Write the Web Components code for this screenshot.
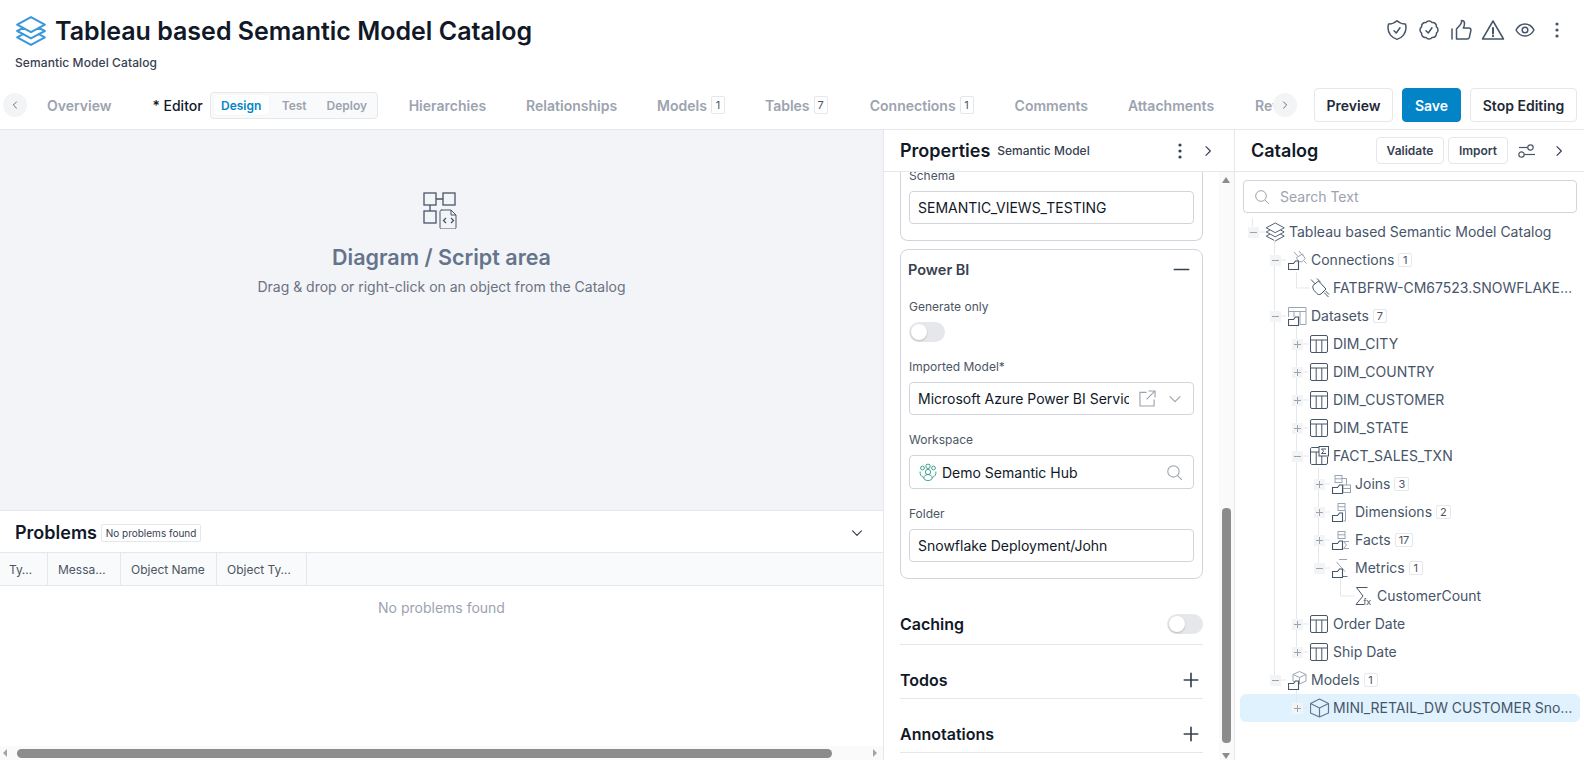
<!DOCTYPE html>
<html lang="en">
<head>
<meta charset="utf-8">
<title>Tableau based Semantic Model Catalog</title>
<style>
html,body{margin:0;padding:0;height:100%;overflow:hidden;background:#fff;font-family:Inter,"Liberation Sans",sans-serif;}
</style>
</head>
<body>
<app-shell>
  <page-header slot="header"></page-header>
  <tab-bar slot="tabs"></tab-bar>
  <diagram-area slot="diagram"></diagram-area>
  <problems-panel slot="problems"></problems-panel>
  <h-scrollbar slot="hbar"></h-scrollbar>
  <properties-panel slot="props"></properties-panel>
  <catalog-panel slot="catalog"></catalog-panel>
</app-shell>
<script>
const folder='<path d="M.5 13.500h5l2-2.500h3v8.500H.5z" fill="#fff" stroke="#475569" stroke-width="1.100"/>';
const L='stroke="#9aa5b4" fill="none" stroke-width="1"';
const D='stroke="#475569" fill="none" stroke-width="1"';
const ICONS={
 layers:{v:'0 0 24 24',p:'<path d="M6.429 9.75 2.25 12l4.179 2.25m0-4.5 5.571 3 5.571-3m-11.142 0L2.25 7.5 12 2.25l9.75 5.25-4.179 2.25m0 0L21.75 12l-4.179 2.25m0 0 4.179 2.25L12 21.75 2.25 16.5l4.179-2.25m11.142 0-5.571 3-5.571-3" stroke-linejoin="round" stroke-linecap="round"/>'},
 shield:{v:'0 0 24 24',p:'<path d="M9 12.75 11.25 15 15 9.75m-3-7.036A11.959 11.959 0 0 1 3.598 6 11.99 11.99 0 0 0 3 9.749c0 5.592 3.824 10.29 9 11.623 5.176-1.332 9-6.03 9-11.622 0-1.31-.21-2.571-.598-3.751h-.152c-3.196 0-6.1-1.248-8.25-3.285Z" stroke-linejoin="round" stroke-linecap="round"/>'},
 badge:{v:'0 0 24 24',p:'<path d="M9 12.75 11.25 15 15 9.75M21 12c0 1.268-.63 2.39-1.593 3.068a3.745 3.745 0 0 1-1.043 3.296 3.745 3.745 0 0 1-3.296 1.043A3.745 3.745 0 0 1 12 21c-1.268 0-2.39-.63-3.068-1.593a3.746 3.746 0 0 1-3.296-1.043 3.745 3.745 0 0 1-1.043-3.296A3.745 3.745 0 0 1 3 12c0-1.268.63-2.39 1.593-3.068a3.745 3.745 0 0 1 1.043-3.296 3.746 3.746 0 0 1 3.296-1.043A3.746 3.746 0 0 1 12 3c1.268 0 2.39.63 3.068 1.593a3.746 3.746 0 0 1 3.296 1.043 3.746 3.746 0 0 1 1.043 3.296A3.745 3.745 0 0 1 21 12Z" stroke-linejoin="round" stroke-linecap="round"/>'},
 thumb:{v:'0 0 24 24',p:'<path d="M3 11v10M7.500 11v10M7.500 11l3.800-4.200c.8-.9 1.200-2 1.200-3.200V2.500c1.800 0 3 1.300 3 3 0 1.500-.5 3.200-1.200 4.500h5.700c1.300 0 2.200 1.200 1.900 2.400l-1.500 6.800c-.3 1.100-1.200 1.800-2.300 1.800H7.500" stroke-linejoin="round" stroke-linecap="round"/>'},
 warn:{v:'0 0 24 24',p:'<path d="M12 3 22.500 21h-21z" stroke-linejoin="round"/><path d="M12 10v5.500M12 17.800v.4" stroke-linecap="round" stroke-width="2"/>'},
 eye:{v:'0 0 24 24',p:'<path d="M3 12C5.200 8 8.300 6 12 6s6.800 2 9 6c-2.200 4-5.300 6-9 6s-6.800-2-9-6z" stroke-linejoin="round"/><circle cx="12" cy="12" r="2.800"/>'},
 kebab:{v:'0 0 24 24',p:'<circle cx="12" cy="6" r="1.600" fill="currentColor" stroke="none"/><circle cx="12" cy="12" r="1.600" fill="currentColor" stroke="none"/><circle cx="12" cy="18" r="1.600" fill="currentColor" stroke="none"/>'},
 chevR:{v:'0 0 24 24',p:'<path d="m8.500 4.500 7.500 7.500-7.500 7.500" stroke-linejoin="round" stroke-linecap="round"/>'},
 chevL:{v:'0 0 24 24',p:'<path d="m15.500 4.500-7.500 7.500 7.500 7.500" stroke-linejoin="round" stroke-linecap="round"/>'},
 chevD:{v:'0 0 24 24',p:'<path d="m4.500 8.500 7.500 7.500 7.500-7.500" stroke-linejoin="round" stroke-linecap="round"/>'},
 plus:{v:'0 0 24 24',p:'<path d="M12 3v18M3 12h18" stroke-linecap="round"/>'},
 minus:{v:'0 0 24 24',p:'<path d="M2 12h20" stroke-linecap="round"/>'},
 search:{v:'0 0 24 24',p:'<circle cx="10.500" cy="10.500" r="8"/><path d="m16.500 16.500 5.500 5.500" stroke-linecap="round"/>'},
 sliders:{v:'0 0 18 14',p:'<circle cx="12.500" cy="3.500" r="2.700"/><path d="M1 3.500h8.800"/><circle cx="3.500" cy="10.500" r="2.700"/><path d="M6.200 10.500H17"/>'},
 ext:{v:'0 0 18 18',p:'<path d="M8 2.500H1v14.500h15v-7M10 1h7v7M17 1 8 10"/>'},
 team:{v:'0 0 18 18',p:'<circle cx="9" cy="3.300" r="2.200"/><circle cx="3.500" cy="5" r="1.900"/><circle cx="14.500" cy="5" r="1.900"/><circle cx="9" cy="9" r="2.600"/><path d="M1.200 8.500c-.6 3 1 5 3.300 5.800M16.800 8.500c.6 3-1 5-3.300 5.800M4.800 15c0-2.200 1.800-3.400 4.200-3.400s4.200 1.200 4.200 3.400c0 1.500-1.800 2.500-4.200 2.500s-4.200-1-4.200-2.500z"/>'},
 diagram:{v:'0 0 34 37',p:'<rect x="1" y="1" width="12" height="12"/><rect x="20" y="1" width="12" height="12"/><rect x="1" y="19" width="12" height="12"/><path d="M13 7h7M7 13v6"/><path d="M18 18h10l5 5v12.500c0 .8-.7 1.500-1.500 1.500h-13c-.8 0-1.500-.7-1.500-1.500V19.500c0-.8.700-1.500 1.500-1.500zM28 18v5h5" stroke-width="1"/><path d="m23 26-2.500 2.500 2.500 2.500M28 26l2.500 2.500-2.500 2.500"/>'},
 table:{v:'1 0 20 20',raw:`<g ${D} stroke-width="1.100"><rect x="1.500" y="1.500" width="17" height="17" rx="1.500"/><path d="M1.500 6h17M7.200 6v12.500M12.800 6v12.500"/></g>`},
 fact:{v:'1 0 20 20',raw:`<g ${D} stroke-width="1.100"><path d="M10 1.500H3c-.8 0-1.500.7-1.500 1.500v14c0 .8.700 1.500 1.500 1.500h14c.8 0 1.500-.7 1.500-1.500v-6M1.500 6H10M7.200 6v12.500M12.800 10v8.500"/><rect x="10" y="0.500" width="9.500" height="9.500"/><path d="M17 3h-4.500l2.200 2.200-2.200 2.300H17" stroke-width="1"/></g>`},
 model:{v:'0 0 20 20',raw:`<g stroke="#64748b" fill="none" stroke-width="1.200"><path d="M9.500 1 18.500 5.500v9.500L9.500 19 .5 15V5.500zM.5 5.500l9 4.500 9-4.500M9.500 10v9" stroke-linejoin="round"/></g>`},
 plug:{v:'0 0 20 20',raw:`<g ${D} stroke-width="1.100"><path d="M3 7.500 8.500 3l7.500 8-5 5c-1.500 1-3 .6-4-.4l-3-3.200C3 11 2.500 9 3 7.500z"/><path d="M1 1.500l4 4.200M7 .5l3.500 3.700M14 14.500l4.500 4.500M15.500 13l3.500 3.500"/></g>`},
 rootlayers:{v:'2 1.200 21.670 21.670',stroke:'#475569',sw:1,p:'<path d="M6.429 9.75 2.25 12l4.179 2.25m0-4.5 5.571 3 5.571-3m-11.142 0L2.25 7.5 12 2.25l9.750 5.250-4.179 2.250m0 0L21.750 12l-4.179 2.250m0 0 4.179 2.250L12 21.750 2.250 16.500l4.179-2.250m11.142 0-5.571 3-5.571-3" stroke-linejoin="round"/>'},
 fConn:{v:'0 0 20 20',raw:`<g ${L}><path d="M6 2l4 4.500M11 1l3.500 4.500M8.500 7.500l6-3.500 2.500 4.500-2.500 3c-2 .8-4 .2-5-1.500zM16 11l2.500 2.500"/></g>${folder}`},
 fData:{v:'0 0 20 20',raw:`<g ${L}><path d="M.5 11V1.500h17.500v17h-6"/><path d="M.5 5.500H18M6 5.500V11M12 5.500v13"/></g>${folder}`},
 fJoin:{v:'0 0 20 20',raw:`<g ${L}><rect x="3" y="1.500" width="7" height="7"/><path d="M3 4.800h7M10 4.500h4.500V11"/><rect x="11" y="11" width="7.500" height="7.500"/><path d="M11 14.500h7.500"/></g>${folder}`},
 fDim:{v:'0 0 20 20',raw:`<g ${L}><rect x="6" y="1.500" width="7" height="7"/><path d="M6 4.800h7M13.500 8.500v10.500h-2"/></g>${folder}`},
 fFact:{v:'0 0 20 20',raw:`<g ${L}><rect x="6" y="1.500" width="7" height="7"/><path d="M6 4.800h7M17 11.500h-5.500l3 3.500-3 3.500H17"/></g>${folder}`},
 fMetric:{v:'0 0 20 20',raw:`<g ${L}><path d="M7 1.500h8M4.500 4 13 13.500"/><path d="M11 18.500h4.500" stroke="#64748b"/></g>${folder}`},
 fModel:{v:'0 0 20 20',raw:`<g ${L}><path d="M11.500 1.500 18 4.500v6.500l-6.500 3-6.500-3V4.500zM5 4.500l6.500 3 6.500-3M11.500 7.500V14" stroke-linejoin="round"/></g>${folder}`},
 sigmaFx:{v:'1 0 20 20',raw:`<path d="M14.500 1.500H3.500L10 10 3 18.500h8" ${D}/><text x="10.500" y="19" font-family="Liberation Sans,sans-serif" font-size="9.500" fill="#475569" stroke="none">fx</text>`},
};
function svg(name,w,h,color,sw,style){
  const i=ICONS[name];
  const body=i.raw||i.p;
  const st=i.stroke||color||'currentColor';
  return `<svg width="${w}" height="${h||w}" viewBox="${i.v}" fill="none" stroke="${st}" stroke-width="${sw||i.sw||1.5}" style="display:block;flex:none;color:${st};${style||''}">${body}</svg>`;
}
function el(name,html){
  customElements.define(name,class extends HTMLElement{
    constructor(){super();this.attachShadow({mode:'open'});}
    connectedCallback(){
      if(this._done)return;this._done=1;
      const t=document.createElement('template');
      t.innerHTML=typeof html==='function'?html(this):html;
      this.shadowRoot.appendChild(t.content);
    }
  });
}
el('app-shell',`<style>
:host{display:flex;flex-direction:column;width:1584px;height:760px;overflow:hidden;font-family:Inter,"Liberation Sans",sans-serif}
main{display:flex;height:630px;min-height:0}
.left{width:883px;border-right:1px solid #e5e7eb;display:flex;flex-direction:column;flex:none}
</style>
<slot name="header"></slot><slot name="tabs"></slot>
<main><div class="left"><slot name="diagram"></slot><slot name="problems"></slot><slot name="hbar"></slot></div>
<slot name="props"></slot><slot name="catalog"></slot></main>`);

el('page-header',`<style>
:host{display:flex;justify-content:space-between;height:86px;flex:none;box-sizing:border-box;padding:0 15px 0 15px}
.tl{display:flex;align-items:center;height:34px;margin-top:14px;gap:7px;margin-left:-1px}
h1{margin:0;font-size:25px;font-weight:600;color:#111827;line-height:34px;white-space:nowrap}
.sub{font-size:12px;font-weight:500;color:#374151;line-height:16px;margin-top:7px;letter-spacing:.1px}
.ic{display:flex;gap:8px;margin-top:18px;height:24px;color:#475569}
</style>
<div><div class="tl">${svg('layers',34,34,'#3b97dc',1.5)}<h1>Tableau based Semantic Model Catalog</h1></div><div class="sub">Semantic Model Catalog</div></div>
<div class="ic">${svg('shield',24)}${svg('badge',24)}${svg('thumb',24)}${svg('warn',24)}${svg('eye',24)}${svg('kebab',24)}</div>`);

el('count-badge',h=>`<style>
:host{display:inline-flex;align-items:center;justify-content:center;box-sizing:border-box;min-width:14px;height:${h.getAttribute('h')||14}px;padding:0 3px;border:1px solid #e5e7eb;border-radius:2px;font-size:11px;font-weight:400;color:#4b5563;background:#fff;margin-left:4px;flex:none;line-height:1}
</style><slot></slot>`);

el('tab-item',`<style>
:host{display:inline-flex;align-items:center;flex:none;font-size:14px;font-weight:600;color:#9ca3af;white-space:nowrap;height:39px}
:host([active]){color:#111827;font-weight:500;margin-left:1px}
</style><slot></slot>`);

el('segmented-control',`<style>
:host{display:inline-flex;align-items:center;box-sizing:border-box;height:27px;width:168px;padding:0 3px;margin:0 -9px 0 -33px;background:#f9fafb;border:1px solid #e5e7eb;border-radius:4px;font-size:12px;font-weight:600;color:#9ca3af;flex:none}
b{font-weight:600}
.on{width:55px;height:20px;background:#fff;border-radius:3px;color:#0284c7;display:flex;align-items:center;justify-content:center;box-shadow:0 0 1px rgba(0,0,0,.12)}
.t{margin-left:13px}.d{margin-left:20px}
</style><b class="on">Design</b><b class="t">Test</b><b class="d">Deploy</b>`);

el('action-button',`<style>
:host{display:inline-flex;align-items:center;justify-content:center;box-sizing:border-box;height:34px;padding:0 13px;border:1px solid #e5e7eb;border-radius:4px;background:#fff;color:#1f2937;font-size:14px;font-weight:600;flex:none;white-space:nowrap}
:host([primary]){background:#0284c7;border-color:#0284c7;color:#fff}
:host([small]){height:27px;font-size:12px;font-weight:600;padding:0 10px;color:#374151}
</style><slot></slot>`);

el('tab-bar',`<style>
:host{display:flex;align-items:center;box-sizing:border-box;height:44px;flex:none;border-bottom:1px solid #e5e7eb;padding:0 7px 5px 3px}
.sb{width:24px;height:24px;border-radius:50%;background:#f3f4f6;display:flex;align-items:center;justify-content:center;flex:none;color:#4b5563}
.strip{flex:1;min-width:0;overflow:hidden;display:flex;align-items:center;gap:40px;margin-left:20px;height:39px}
.end{display:flex;gap:9px;margin-left:17px}
</style>
<div class="sb">${svg('chevL',10,10,'#4b5563',2)}</div>
<div class="strip">
<tab-item>Overview</tab-item><tab-item active>* Editor</tab-item><segmented-control></segmented-control>
<tab-item>Hierarchies</tab-item><tab-item>Relationships</tab-item>
<tab-item>Models<count-badge h="18">1</count-badge></tab-item>
<tab-item>Tables<count-badge h="18">7</count-badge></tab-item>
<tab-item style="margin-left:2px">Connections<count-badge h="18">1</count-badge></tab-item>
<tab-item style="margin-left:1px">Comments</tab-item><tab-item>Attachments</tab-item><tab-item style="margin-left:1px">Reviews</tab-item>
</div>
<div class="sb">${svg('chevR',10,10,'#4b5563',2)}</div>
<div class="end"><action-button style="width:79px">Preview</action-button><action-button primary style="width:59px">Save</action-button><action-button style="width:107px">Stop Editing</action-button></div>`);

el('diagram-area',`<style>
:host{display:flex;flex-direction:column;align-items:center;height:380px;flex:none;background:#f3f4f8;box-sizing:border-box;padding-top:62px}
h2{margin:14px 0 0;font-size:21.500px;font-weight:600;line-height:28px;color:#64748b}
p{margin:6px 0 0;font-size:14px;line-height:20px;color:#6b7280}
</style>${svg('diagram',34,37,'#475569',1.3,'margin-left:-4px')}<h2>Diagram / Script area</h2><p>Drag &amp; drop or right-click on an object from the Catalog</p>`);

el('problems-panel',`<style>
:host{display:block;height:236px;flex:none;box-sizing:border-box;border-top:1px solid #e5e7eb;background:#fff}
.h{display:flex;align-items:center;height:41px;box-sizing:border-box;padding:2px 19px 0 15px}
h3{margin:0;font-size:18px;font-weight:600;color:#111827}
.b{margin-left:4px;height:18px;width:100px;justify-content:center;box-sizing:border-box;border:1px solid #e5e7eb;border-radius:2px;font-size:10px;display:flex;align-items:center;color:#374151;white-space:nowrap}
.c{margin-left:auto}
.t{display:grid;grid-template-columns:48px 73px 96px 90px 1fr;height:34px;box-sizing:border-box;background:#f9fafb;border-top:1px solid #e5e7eb;border-bottom:1px solid #e5e7eb;font-size:12px;color:#4b5563}
.t div{display:flex;align-items:center;padding-left:10px;border-right:1px solid #e5e7eb;white-space:nowrap}
.t div:last-child{border:0}
.e{text-align:center;font-size:14px;line-height:20px;color:#9ca3af;margin-top:12px}
</style>
<div class="h"><h3>Problems</h3><span class="b">No problems found</span><span class="c">${svg('chevD',14,14,'#374151',2)}</span></div>
<div class="t"><div style="padding-left:9px">Ty…</div><div>Messa…</div><div>Object Name</div><div>Object Ty…</div><div></div></div>
<div class="e">No problems found</div>`);

el('h-scrollbar',`<style>
:host{display:flex;align-items:center;height:14px;flex:none;background:#fafafa;position:relative}
.l,.r{width:0;height:0;border-top:4px solid transparent;border-bottom:4px solid transparent;flex:none}
.l{border-right:4px solid #a3a3a3;margin-left:3px}
.r{border-left:4px solid #a3a3a3;margin-right:6px}
.th{height:9px;width:815px;background:#8c8c8c;border-radius:5px;margin-left:10px}
.sp{flex:1}
</style><i class="l"></i><i class="th"></i><span class="sp"></span><i class="r"></i>`);

el('form-field',h=>`<style>
:host{display:block}
label{display:block;font-size:12px;line-height:18px;color:#4b5563;margin-bottom:6px}
.box{display:flex;align-items:center;box-sizing:border-box;height:${h.getAttribute('boxh')||33}px;border:1px solid #d1d5db;border-radius:4px;padding:0 9px 0 8px;font-size:14px;color:#111827;background:#fff}
.v{flex:1;min-width:0;white-space:nowrap;overflow:hidden;}
</style><label>${h.getAttribute('label')}</label><div class="box"><slot name="pre"></slot><span class="v">${h.getAttribute('value')}</span><slot></slot></div>`);

el('toggle-switch',`<style>
:host{display:block;width:36px;height:20px;border-radius:10px;background:#e5e7eb;position:relative;flex:none}
i{position:absolute;left:2px;top:2px;width:16px;height:16px;border-radius:50%;background:#fff;box-shadow:0 1px 2px rgba(0,0,0,.2)}
</style><i></i>`);

el('section-row',h=>`<style>
:host{display:flex;align-items:center;justify-content:space-between;border-bottom:1px solid #e5e7eb;padding:23px 0 6px;font-size:16px;font-weight:600;color:#111827;line-height:24px}
</style><span>${h.getAttribute('label')}</span><slot></slot>`);

el('v-scrollbar',`<style>
:host{display:block;width:15px;background:#fafafa;flex:none;position:relative}
.u,.d{position:absolute;left:3px;width:0;height:0;border-left:4px solid transparent;border-right:4px solid transparent}
.u{top:5px;border-bottom:6px solid #8c8c8c}
.d{bottom:1px;border-top:6px solid #8c8c8c}
.th{position:absolute;left:3px;width:9px;top:336px;height:235px;background:#8c8c8c;border-radius:4px}
</style><i class="u"></i><i class="th"></i><i class="d"></i>`);

el('properties-panel',`<style>
:host{display:flex;flex-direction:column;width:351px;box-sizing:border-box;border-right:1px solid #e5e7eb;flex:none;height:630px}
.h{display:flex;align-items:center;height:41px;border-bottom:1px solid #e5e7eb;padding:0 19px 0 16px;flex:none;color:#374151}
h3{margin:0;font-size:18px;font-weight:600;color:#111827}
.s{font-size:12px;font-weight:500;margin-left:7px;color:#374151}
.k{margin-left:auto;margin-right:9px}
.b{display:flex;flex:1;min-height:0}
.c{flex:1;min-width:0;overflow:hidden;padding:0 16px;box-sizing:border-box}
.card{border:1px solid #d1d5db;border-radius:8px;padding:0 8px 16px}
.c1{border-top:0;border-top-left-radius:0;border-top-right-radius:0;margin-top:-5px;margin-bottom:8px;}
.ph{display:flex;align-items:center;justify-content:space-between;height:48px;padding-bottom:10px;box-sizing:border-box;font-size:14.500px;font-weight:600;color:#374151;padding-right:4px;margin-left:-1px}
.lbl{font-size:12px;line-height:18px;color:#4b5563;margin-bottom:6px}
form-field{margin-top:16px}
.cach{margin-top:24px;padding:9px 0 8px}
</style>
<div class="h"><h3>Properties</h3><span class="s">Semantic Model</span><span class="k">${svg('kebab',24,24,'#374151')}</span>${svg('chevR',14,14,'#374151',2)}</div>
<div class="b"><div class="c">
<div class="card c1"><form-field style="margin:0" label="Schema" value="SEMANTIC_VIEWS_TESTING"></form-field></div>
<div class="card">
<div class="ph">Power BI ${svg('minus',17,17,'#374151',2.4)}</div>
<div class="lbl">Generate only</div><toggle-switch></toggle-switch>
<form-field label="Imported Model*" value="Microsoft Azure Power BI Service">${svg('ext',17,17,'#9ca3af',1.2,'margin-left:10px;margin-right:11px')}${svg('chevD',16,16,'#9ca3af',1.600,'margin-right:1px')}</form-field>
<form-field boxh="34" label="Workspace" value="Demo Semantic Hub"><span slot="pre" style="margin-left:1px;margin-right:5px">${svg('team',18,18,'#3f9f8f',1)}</span>${svg('search',17,17,'#9ca3af',1.500,'margin-right:1px')}</form-field>
<form-field label="Folder" value="Snowflake Deployment/John"></form-field>
</div>
<section-row class="cach" label="Caching"><toggle-switch></toggle-switch></section-row>
<section-row label="Todos">${svg('plus',18,18,'#374151',2.200,'margin-right:3px')}</section-row>
<section-row label="Annotations">${svg('plus',18,18,'#374151',2.200,'margin-right:3px')}</section-row>
</div><v-scrollbar></v-scrollbar></div>`);

el('tree-row',h=>{
  const d=+h.getAttribute('d')||0,t=h.getAttribute('t'),c=h.getAttribute('c'),ic=h.getAttribute('icon');
  const mark=t==='+'?'M0 3.500h7M3.500 0v7':'M0 3.500h7';
  const box=t?`<span class="x"><svg width="7" height="7" viewBox="0 0 7 7"><path d="${mark}" stroke="#9ca3af" stroke-width="1"/></svg></span>`:'';
  return `<style>
:host{display:flex;align-items:center;height:28px;margin:0 4px 0 5px;padding:0 4px 0 ${4+22*d}px;font-size:14px;color:#475569;border-radius:6px;box-sizing:border-box;min-width:0}
:host([selected]){background:#e0f2fe}
.w{width:18px;flex:none;display:flex;justify-content:center;margin-right:4px}
.x{width:11px;height:11px;background:#f3f4f6;display:flex;align-items:center;justify-content:center;position:relative;z-index:1}
.n{margin:0 0 2px 3px;white-space:nowrap;overflow:hidden;text-overflow:ellipsis;min-width:0}
svg{flex:none}
</style><span class="w">${box}</span>${svg(ic,20,20)}<span class="n">${h.getAttribute('label')}</span>${c?`<count-badge>${c}</count-badge>`:''}`;
});

el('tree-view',`<style>
:host{display:block;position:relative;margin-top:5px}
svg.g{position:absolute;left:0;top:0;z-index:0;pointer-events:none}
</style>
<svg class="g" width="349" height="520" viewBox="1235 218 349 520" fill="none" stroke="#e5e7eb" stroke-width="1">
<path d="M1252.500 218v8M1259 232h6"/>
<path d="M1274.500 240v436M1280 260h6M1280 316h6M1280 680h6"/>
<path d="M1296.500 272v16h13"/>
<path d="M1296.500 326v322M1302 344h7M1302 372h7M1302 400h7M1302 428h7M1302 456h7M1302 624h7M1302 652h7"/>
<path d="M1318.500 468v100M1324 484h6M1324 512h6M1324 540h6M1324 568h6"/>
<path d="M1340.500 578v18h14"/>
<path d="M1296.500 690v12M1302 708h7"/>
</svg><slot></slot>`);

el('catalog-panel',`<style>
:host{display:flex;flex-direction:column;flex:1;min-width:0;height:630px;overflow:hidden}
.h{display:flex;align-items:center;height:41px;border-bottom:1px solid #e5e7eb;padding:0 18px 0 16px;flex:none;color:#374151}
h3{margin:0;font-size:18px;font-weight:600;color:#111827;margin-right:auto}
.f{margin:0 0 0 10px}
.ch{margin-left:16px}
.s{display:flex;align-items:center;margin:8px 7px 0 8px;height:33px;box-sizing:border-box;border:1px solid #d1d5db;border-radius:4px;padding:0 10px;font-size:14px;color:#9ca3af;gap:10px}
</style>
<div class="h"><h3>Catalog</h3><action-button small style="width:68px">Validate</action-button><action-button small style="width:60px;margin-left:4px">Import</action-button><span class="f">${svg('sliders',18,14,'#475569',1.200)}</span><span class="ch">${svg('chevR',14,14,'#374151',2)}</span></div>
<div class="s">${svg('search',16,16,'#9ca3af',1.500)}<span>Search Text</span></div>
<tree-view>
<tree-row d="0" t="-" icon="rootlayers" label="Tableau based Semantic Model Catalog"></tree-row>
<tree-row d="1" t="-" icon="fConn" label="Connections" c="1"></tree-row>
<tree-row d="2" icon="plug" label="FATBFRW-CM67523.SNOWFLAKECOMPUTING.COM"></tree-row>
<tree-row d="1" t="-" icon="fData" label="Datasets" c="7"></tree-row>
<tree-row d="2" t="+" icon="table" label="DIM_CITY"></tree-row>
<tree-row d="2" t="+" icon="table" label="DIM_COUNTRY"></tree-row>
<tree-row d="2" t="+" icon="table" label="DIM_CUSTOMER"></tree-row>
<tree-row d="2" t="+" icon="table" label="DIM_STATE"></tree-row>
<tree-row d="2" t="-" icon="fact" label="FACT_SALES_TXN"></tree-row>
<tree-row d="3" t="+" icon="fJoin" label="Joins" c="3"></tree-row>
<tree-row d="3" t="+" icon="fDim" label="Dimensions" c="2"></tree-row>
<tree-row d="3" t="+" icon="fFact" label="Facts" c="17"></tree-row>
<tree-row d="3" t="-" icon="fMetric" label="Metrics" c="1"></tree-row>
<tree-row d="4" icon="sigmaFx" label="CustomerCount"></tree-row>
<tree-row d="2" t="+" icon="table" label="Order Date"></tree-row>
<tree-row d="2" t="+" icon="table" label="Ship Date"></tree-row>
<tree-row d="1" t="-" icon="fModel" label="Models" c="1"></tree-row>
<tree-row d="2" t="+" selected icon="model" label="MINI_RETAIL_DW CUSTOMER Snowflake Model"></tree-row>
</tree-view>`);
</script>
</body>
</html>
